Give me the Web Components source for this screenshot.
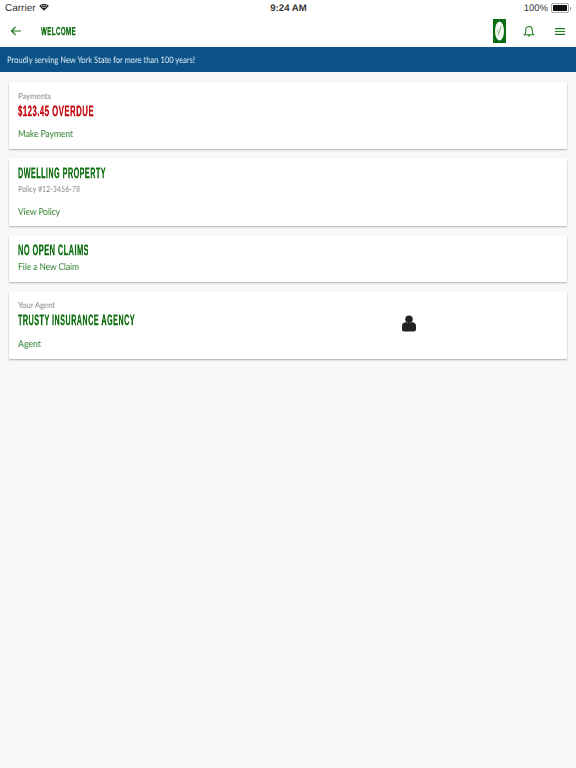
<!DOCTYPE html>
<html>
<head>
<meta charset="utf-8">
<title>Welcome</title>
<style>
  html, body { margin: 0; height: 100%; }
  body { background: #f8f8f8; font-family: Lato, "Noto Sans", sans-serif; text-rendering: geometricPrecision; }
  app-cards { padding: 10px 9px 0; }
</style>
</head>
<body>
<status-bar></status-bar>
<app-header title="WELCOME"></app-header>
<info-banner><fit-text width="188">Proudly serving New York State for more than 100 years!</fit-text></info-banner>
<app-cards>
  <info-card style="height:67px">
    <fit-text slot="label" width="33">Payments</fit-text>
    <fit-text slot="title" width="76" style="color:#c4060f">$123.45 OVERDUE</fit-text>
    <fit-text slot="link" width="55">Make Payment</fit-text>
  </info-card>
  <info-card style="height:68px" order="title">
    <fit-text slot="title" width="88">DWELLING PROPERTY</fit-text>
    <fit-text slot="label" width="62">Policy #12-3456-78</fit-text>
    <fit-text slot="link" width="42">View Policy</fit-text>
  </info-card>
  <info-card style="height:47px" compact>
    <fit-text slot="title" width="71">NO OPEN CLAIMS</fit-text>
    <fit-text slot="link" width="61">File a New Claim</fit-text>
  </info-card>
  <info-card style="height:68px" agent>
    <fit-text slot="label" width="37">Your Agent</fit-text>
    <fit-text slot="title" width="117">TRUSTY INSURANCE AGENCY</fit-text>
    <fit-text slot="link" width="23">Agent</fit-text>
  </info-card>
</app-cards>

<script>
  class StatusBar extends HTMLElement {
    constructor() {
      super();
      this.attachShadow({ mode: "open" });
      this.shadowRoot.innerHTML = `
        <style>
          :host { display: grid; grid-template-columns: 1fr auto 1fr; align-items: center; box-sizing: border-box; height: 15px; padding: 1px 5px 0;
            background: #fff; color: #333; font: 10px "Liberation Sans", Arial, sans-serif; text-rendering: geometricPrecision; }
          .left { display: flex; align-items: center; gap: 3px; }
          .time { font-weight: 700; font-size: 9.600px; color: #333; margin-left: 1px; }
          .right { display: flex; align-items: center; justify-content: flex-end; gap: 3px; font-size: 9.500px; }
          .batt { display: flex; align-items: center; }
          .shell { width: 14px; height: 6px; padding: 1px; border: 1px solid #aaa; border-radius: 2px; }
          .fill { height: 100%; background: #111; border-radius: 1px; }
          .nub { width: 1px; height: 3px; background: #999; margin-left: 1px; }
          svg { margin-top: -2px; }
        </style>
        <div class="left">Carrier
          <svg width="10" height="8" viewBox="0 0 12 9"><path fill="#222" d="M6 9 .2 3.2C3.4.2 8.6.2 11.800 3.2L6 9z"/><path fill="#fff" d="M2 3.300c2.300-1.800 5.700-1.800 8 0l-.6.6c-2-1.500-4.800-1.500-6.800 0zM3.600 5c1.400-1 3.400-1 4.800 0l-.6.6c-1.100-.7-2.500-.7-3.600 0z"/></svg>
        </div>
        <div class="time">9:24 AM</div>
        <div class="right">100%
          <div class="batt"><div class="shell"><div class="fill"></div></div><div class="nub"></div></div>
        </div>`;
    }
  }
  customElements.define("status-bar", StatusBar);

  class AppHeader extends HTMLElement {
    constructor() {
      super();
      this.attachShadow({ mode: "open" });
      this.shadowRoot.innerHTML = `
        <style>
          :host { display: flex; align-items: center; height: 32px; background: #fff; padding: 0 11px 0 10px; color: #1b7a1b; }
          svg { display: block; flex: none; }
          h1 { flex: 1; display: flex; margin: 1px 0 0 19px; font: 700 11.500px "Liberation Sans", sans-serif; color: #0d6e0d;
            letter-spacing: .7px; -webkit-text-stroke: .25px #0d6e0d; }
          .logo { margin-right: 17px; }
          .bell { margin-right: 20px; height: 12px; }
          .menu { margin-top: 1px; }
        </style>
        <svg width="12" height="12" viewBox="0 0 12 12" fill="none" stroke="#1b7a1b" stroke-width="1.2"><path d="M11 6H1.500M5.500 2 1.500 6l4 4"/></svg>
        <h1><fit-text width="35"></fit-text></h1>
        <svg class="logo" width="13" height="24" viewBox="0 0 13 24">
          <rect width="13" height="24" fill="#0b6b12"/>
          <ellipse cx="6.500" cy="12" rx="4.500" ry="9.500" fill="#f4f8f2"/>
          <path d="M5 17 8 7M6 12l2-2M5.500 14.500 4.500 11" stroke="#7fae82" stroke-width=".8" fill="none"/>
        </svg>
        <svg class="bell" width="12" height="13" viewBox="0 0 12 13" fill="none" stroke="#1b7a1b" stroke-width="1.100"><path d="M1 10.500c1-1 1.500-1.800 1.500-3.500V5a3.500 3.500 0 0 1 7 0v2c0 1.700.5 2.500 1.500 3.500zM4.800 12h2.400"/></svg>
        <svg class="menu" width="10" height="7" viewBox="0 0 10 7" stroke="#1b7a1b" stroke-width="1.100"><path d="M0 .6h10M0 3.500h10M0 6.400h10"/></svg>`;
      this.shadowRoot.querySelector("fit-text").textContent = this.getAttribute("title");
    }
  }
  customElements.define("app-header", AppHeader);

  class InfoBanner extends HTMLElement {
    constructor() {
      super();
      this.attachShadow({ mode: "open" });
      this.shadowRoot.innerHTML = `
        <style>
          :host { display: flex; align-items: center; height: 25px; padding: 0 7px; background: #0b5288; color: #e4edf4;
            font: 9px Lato, "Noto Sans", sans-serif; }
        </style>
        <slot></slot>`;
    }
  }
  customElements.define("info-banner", InfoBanner);

  class AppCards extends HTMLElement {
    constructor() {
      super();
      this.attachShadow({ mode: "open" });
      this.shadowRoot.innerHTML = `
        <style>
          :host { display: flex; flex-direction: column; gap: 9px; }
        </style>
        <slot></slot>`;
    }
  }
  customElements.define("app-cards", AppCards);

  class InfoCard extends HTMLElement {
    constructor() {
      super();
      this.attachShadow({ mode: "open" });
      const isTitleFirst = this.getAttribute("order") === "title";
      const isCompact = this.hasAttribute("compact");
      const isAgent = this.hasAttribute("agent");
      const title = `<div class="title"><slot name="title"></slot></div>`;
      const label = `<div class="label"><slot name="label"></slot></div>`;
      const head = isCompact ? title : isTitleFirst ? title + label : label + title;
      this.shadowRoot.innerHTML = `
        <style>
          :host { display: flex; box-sizing: border-box; padding: 0 9px; background: #fff; border-radius: 1px;
            box-shadow: 0 1px 2px rgba(0,0,0,.3); position: relative; }
          .col { flex: 1; display: flex; flex-direction: column; align-items: flex-start; }
          .label { font: 8.500px/11px Lato, "Noto Sans", sans-serif; color: #858585; margin-top: 9px; }
          .title { font: 700 15px/18px "Liberation Sans", sans-serif; color: #0d6e0d; letter-spacing: .9px; margin-top: 1px;
            -webkit-text-stroke: .3px currentColor; }
          :host([order]) .title, :host([compact]) .title { margin-top: 7px; }
          :host([order]) .label { margin-top: 1px; }
          .link { margin-top: auto; margin-bottom: 8px; font: 9.500px/13px Lato, "Noto Sans", sans-serif; color: #2b7d2b; }
          :host([order]) .link { margin-bottom: 7px; }
          .agent { position: absolute; left: 393px; top: 24px; }
        </style>
        <div class="col">
          ${head}
          <div class="link"><slot name="link"></slot></div>
        </div>
        ${isAgent ? `<svg class="agent" width="14" height="17" viewBox="0 0 15 17"><circle cx="7.500" cy="4" r="4" fill="#222"/><path fill="#222" d="M0 11c0-2.500 2-3.500 4-3.800 2 1 5 1 7 0 2 .3 4 1.300 4 3.800v4c0 1.200-.8 2-2 2H2c-1.200 0-2-.8-2-2z"/></svg>` : ""}`;
    }
  }
  customElements.define("info-card", InfoCard);

  // squeezes its text to a given width, no condensed font is installed
  // defined last so the fonts of the parents are in place when it measures
  class FitText extends HTMLElement {
    constructor() {
      super();
      this.attachShadow({ mode: "open" });
      this.shadowRoot.innerHTML = `
        <style>
          :host { display: inline-block; white-space: nowrap; transform-origin: left center; will-change: transform; }
        </style>
        <slot></slot>`;
    }
    connectedCallback() {
      const target = parseFloat(this.getAttribute("width"));
      const w = this.getBoundingClientRect().width;
      if (target && w) this.style.transform = `scaleX(${target / w})`;
    }
  }
  customElements.define("fit-text", FitText);
</script>
</body>
</html>
